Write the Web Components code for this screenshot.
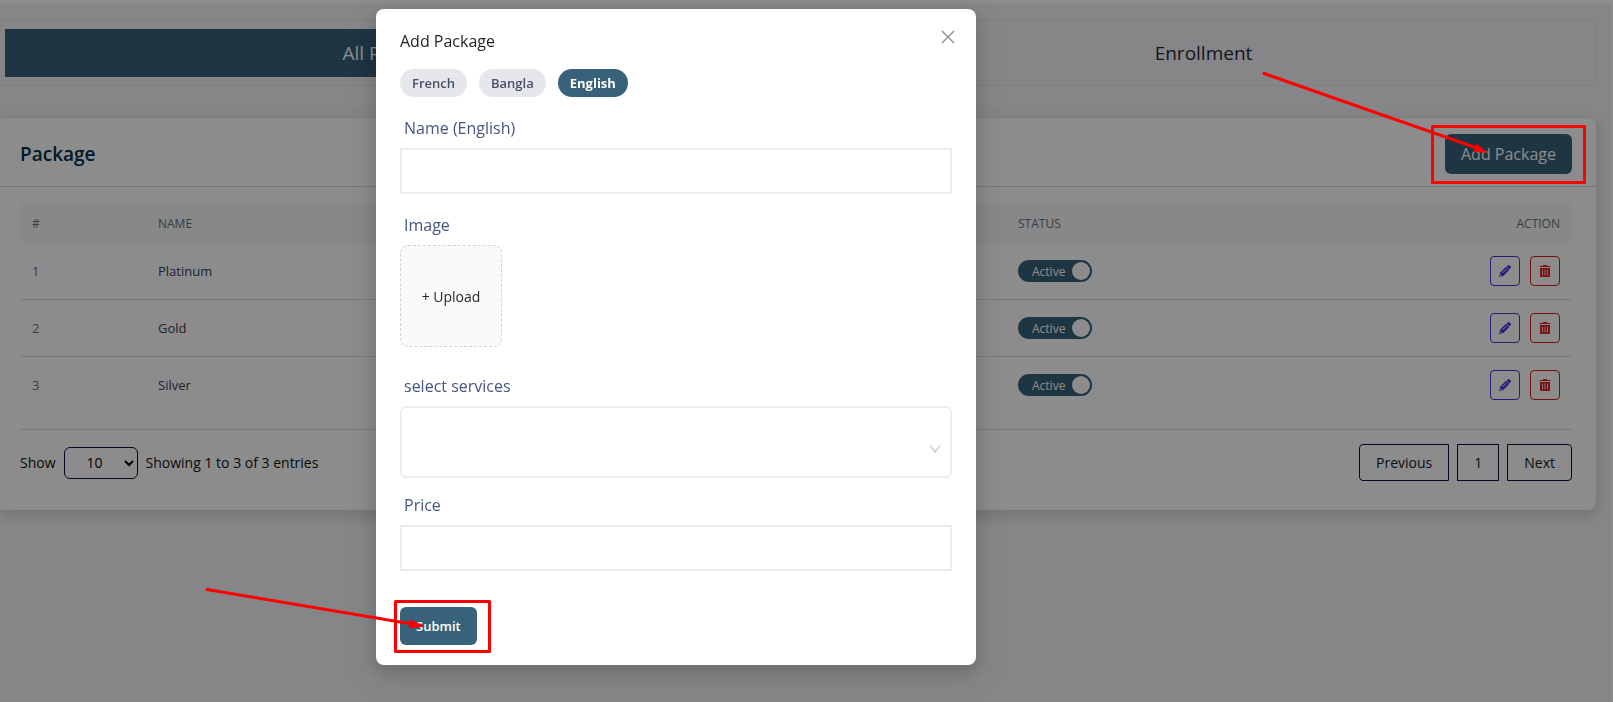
<!DOCTYPE html>
<html lang="en">
<head>
<meta charset="utf-8">
<title>Package</title>
<style>
  body {
    margin: 0;
    min-height: 100vh;
    background: #fff;
    font-family: "Open Sans", "Noto Sans", sans-serif;
    font-size: 14px;
    color: #111;
    --brand: #38617a;
    --line: #dcdde0;
    --navy: #07143f;
  }
</style>
</head>
<body>

<admin-page>
  <tab-bar>
    <button type="button" class="active">All Packages</button>
    <button type="button">Enrollment</button>
  </tab-bar>
  <package-card></package-card>
</admin-page>

<modal-dialog heading="Add Package">
  <lang-pills></lang-pills>
  <form-field label="Name (English)"></form-field>
  <form-field label="Image" type="upload"></form-field>
  <form-field label="select services" type="select"></form-field>
  <form-field label="Price"></form-field>
  <submit-button>Submit</submit-button>
</modal-dialog>

<red-marks></red-marks>

<script>
// make a template from a string
function html(markup) {
  const template = document.createElement('template');
  template.innerHTML = markup;
  return template;
}

// attach shadow dom and paste the template in it
class BaseElement extends HTMLElement {
  constructor() {
    super();
    this.attachShadow({mode: 'open'});
    this.shadowRoot.appendChild(this.constructor.template.content.cloneNode(true));
  }
}

// grey area that holds the page content
class AdminPage extends BaseElement {
  static template = html(`
    <style>
      :host {
        display: flex;
        flex-direction: column;
        gap: 32px;
        box-sizing: border-box;
        min-height: calc(100vh - 4px);
        margin: 4px 1px 0 0;
        padding: 16px 16px 32px 0;
        background: #f4f5f9;
        border-radius: 0 6px 0 0;
      }
    </style>
    <slot></slot>
  `)
}

class TabBar extends BaseElement {
  static template = html(`
    <style>
      :host {
        display: grid;
        grid-template-columns: 1fr 1fr;
        gap: 24px;
        padding: 8px 0 8px 5px;
        border: 1px solid #e5e7eb;
        border-left: 0;
      }

      ::slotted(button) {
        height: 48px;
        border: 0;
        background: none;
        font: 400 19px "Open Sans", sans-serif;
        color: #1f2937;
        cursor: pointer;
      }

      ::slotted(button.active) {
        background: var(--brand);
        color: #fff;
      }
    </style>
    <slot></slot>
  `)
}

// card with title, table and pagination
class PackageCard extends BaseElement {
  static template = html(`
    <style>
      :host {
        display: block;
        background: #fff;
        border-radius: 0 8px 8px 0;
        box-shadow: 0 4px 16px rgba(0, 0, 0, .18);
      }

      header {
        display: flex;
        justify-content: space-between;
        align-items: center;
        padding: 16px 24px 12px 20px;
        border-bottom: 1px solid #d4d6da;
      }

      h2 {
        margin: 0;
        font-size: 19px;
        font-weight: 600;
        line-height: 24px;
        color: #02304a;
      }

      .add {
        height: 40px;
        padding: 0 16px;
        border: 0;
        border-radius: 6px;
        background: var(--brand);
        color: #fff;
        font: 400 16px "Open Sans", sans-serif;
        cursor: pointer;
      }

      .content {
        padding: 16px 24px 29px 20px;
      }

      .table-wrap {
        padding-bottom: 16px;
        border-bottom: 1px solid var(--line);
      }

      table {
        width: 100%;
        table-layout: fixed;
        border-collapse: separate;
        border-spacing: 0;
      }

      th {
        height: 40px;
        padding: 0 12px;
        background: #f7f7f7;
        font-size: 12px;
        font-weight: 500;
        text-align: left;
        color: #6b7280;
      }

      th:nth-child(1) { width: 126px; box-sizing: border-box; }
      th:nth-child(2) { width: 860px; box-sizing: border-box; }
      th:last-child { text-align: right; }

      footer {
        display: flex;
        justify-content: space-between;
        align-items: center;
        padding-top: 14px;
      }

      .show, .pages {
        display: flex;
        align-items: center;
        gap: 8px;
      }

      .show select {
        width: 74px;
        height: 32px;
        padding: 0 0 0 18px;
        border: 1px solid var(--navy);
        border-radius: 6px;
        background: transparent;
        font: 400 14px "Open Sans", sans-serif;
        color: #000;
      }

      .pages button {
        height: 37px;
        padding: 0 16px;
        border: 1px solid var(--navy);
        border-radius: 0;
        background: none;
        font: 400 14px "Open Sans", sans-serif;
        color: #111827;
      }

      .pages button:first-child { border-radius: 4px 0 0 4px; }
      .pages button:last-child { border-radius: 0 4px 4px 0; }
    </style>

    <header>
      <h2>Package</h2>
      <button type="button" class="add">Add Package</button>
    </header>
    <div class="content">
      <div class="table-wrap">
        <table>
          <thead>
            <tr><th>#</th><th>NAME</th><th>STATUS</th><th>ACTION</th></tr>
          </thead>
          <tbody></tbody>
        </table>
      </div>
      <footer>
        <div class="show">
          <label for="size">Show</label>
          <select id="size"><option>10</option><option>20</option><option>50</option></select>
          <span>Showing 1 to 3 of 3 entries</span>
        </div>
        <div class="pages">
          <button type="button">Previous</button>
          <button type="button">1</button>
          <button type="button">Next</button>
        </div>
      </footer>
    </div>
  `)

  static row = html(`
    <style>
      td {
        height: 56px;
        padding: 0 12px;
        border-bottom: 1px solid var(--line);
        font-size: 13px;
        color: #374151;
      }

      td:first-child { color: #6b7280; }
      tr:last-child td { border-bottom: 0; }
    </style>
    <tr>
      <td class="id"></td>
      <td class="name"></td>
      <td><status-switch></status-switch></td>
      <td><row-actions></row-actions></td>
    </tr>
  `)

  connectedCallback() {
    const body = this.shadowRoot.querySelector('tbody');
    const names = ['Platinum', 'Gold', 'Silver'];

    this.shadowRoot.appendChild(PackageCard.row.content.querySelector('style').cloneNode(true));
    names.forEach((name, i) => {
      const row = PackageCard.row.content.querySelector('tr').cloneNode(true);
      row.querySelector('.id').textContent = i + 1;
      row.querySelector('.name').textContent = name;
      body.appendChild(row);
    });
  }
}

class StatusSwitch extends BaseElement {
  static template = html(`
    <style>
      :host { display: flex; }

      label {
        display: flex;
        align-items: center;
        justify-content: space-between;
        box-sizing: border-box;
        width: 74px;
        height: 22px;
        padding: 0 2px 0 14px;
        border-radius: 11px;
        background: var(--brand);
        color: #fff;
        font-size: 12px;
        cursor: pointer;
      }

      input {
        appearance: none;
        width: 18px;
        height: 18px;
        margin: 0;
        border-radius: 50%;
        background: #fff;
      }
    </style>
    <label>Active <input type="checkbox" checked></label>
  `)
}

class RowActions extends BaseElement {
  static template = html(`
    <style>
      :host {
        display: flex;
        justify-content: flex-end;
        gap: 10px;
      }

      button {
        display: grid;
        place-items: center;
        width: 30px;
        height: 30px;
        padding: 0;
        border: 1px solid;
        border-radius: 4px;
        background: none;
        cursor: pointer;
      }

      .edit { color: #4338e0; }
      .delete { color: #dc2020; }
    </style>
    <button type="button" class="edit" aria-label="Edit">
      <svg width="12" height="12" viewBox="0 0 12 12" fill="currentColor">
        <path d="M7.600 1.600 9 .3q.8-.6 1.6.1l1 1q.7.8.1 1.6l-1.300 1.400z"/>
        <path fill-rule="evenodd" d="M7 1.800 10.200 5 4.300 10.900 0 12l1.100-4.300zM7 3.900 3.400 7.500l.5.500 3.600-3.600zM1.500 9.200l-.4 1.700 1.700-.4z"/>
      </svg>
    </button>
    <button type="button" class="delete" aria-label="Delete">
      <svg width="12" height="12" viewBox="0 0 12 12" fill="currentColor">
        <path d="M4 0h4v1h3q.5 0 .5.500V2H.5v-.5Q.5 1 1 1h3z"/>
        <path fill-rule="evenodd" d="M1 3h10v8q0 1-1 1H2q-1 0-1-1zM3.200 4.500v6h.8v-6zM5.600 4.500v6h.8v-6zM8 4.500v6h.8v-6z"/>
      </svg>
    </button>
  `)
}

// mask and white box; the box is centred in the area left of the gutter
class ModalDialog extends BaseElement {
  static template = html(`
    <style>
      :host {
        position: fixed;
        inset: 0;
        display: flex;
        justify-content: center;
        align-items: flex-start;
        padding: 9px 261px 0 0;
        background: rgba(0, 0, 0, .45);
      }

      section {
        box-sizing: border-box;
        width: 600px;
        padding: 20px 24px;
        border-radius: 8px;
        background: #fff;
        box-shadow: 0 6px 16px rgba(0, 0, 0, .12), 0 9px 32px 8px rgba(0, 0, 0, .1);
      }

      header {
        display: flex;
        justify-content: space-between;
        align-items: flex-start;
        margin-bottom: 16px;
      }

      h1 {
        margin: 0;
        font-size: 16px;
        font-weight: 500;
        line-height: 24px;
        color: #1f1f1f;
      }

      button {
        display: grid;
        place-items: center;
        width: 16px;
        height: 16px;
        margin-right: -4px;
        padding: 0;
        border: 0;
        background: none;
        color: #8c8c8c;
        cursor: pointer;
      }
    </style>
    <section role="dialog" aria-labelledby="heading">
      <header>
        <h1 id="heading"></h1>
        <button type="button" aria-label="Close">
          <svg width="14" height="14" viewBox="0 0 14 14" stroke="currentColor" stroke-width="1.300">
            <path d="M1 1l12 12M13 1 1 13"/>
          </svg>
        </button>
      </header>
      <slot></slot>
    </section>
  `)

  connectedCallback() {
    this.shadowRoot.querySelector('h1').textContent = this.getAttribute('heading');
  }
}

class LangPills extends BaseElement {
  static template = html(`
    <style>
      :host {
        display: flex;
        gap: 12px;
        margin-bottom: 20px;
      }

      button {
        height: 28px;
        padding: 0 12px;
        border: 0;
        border-radius: 14px;
        background: #e5e7eb;
        color: #475069;
        font: 600 13px "Open Sans", sans-serif;
        cursor: pointer;
      }

      .active {
        background: var(--brand);
        color: #fff;
        font-weight: 700;
      }
    </style>
    <button type="button">French</button>
    <button type="button">Bangla</button>
    <button type="button" class="active">English</button>
  `)
}

class FormField extends BaseElement {
  static template = html(`
    <style>
      :host {
        display: flex;
        flex-direction: column;
        gap: 9px;
        margin-bottom: 20px;
      }

      :host([type="upload"]) { margin-bottom: 28px; }
      :host([type="select"]) { margin-bottom: 16px; }

      label {
        padding-left: 4px;
        font-size: 16px;
        line-height: 22px;
        color: #475681;
      }

      input, select {
        box-sizing: border-box;
        width: 100%;
        height: 46px;
        padding: 0 12px;
        border: 2px solid #ededed;
        border-radius: 0;
        background: #fff;
        font: inherit;
      }

      select {
        appearance: none;
        height: 72px;
        border-radius: 6px;
      }

      .select {
        display: grid;
        position: relative;
      }

      .select svg {
        position: absolute;
        right: 11px;
        bottom: 23px;
        pointer-events: none;
      }

      button {
        width: 102px;
        height: 102px;
        padding: 0;
        border: 1px dashed #d4d4d4;
        border-radius: 8px;
        background: #fafafa;
        color: #262626;
        font: 400 14px "Open Sans", sans-serif;
        cursor: pointer;
      }
    </style>
    <label for="control"></label>
  `)

  connectedCallback() {
    const controls = {
      text: '<input id="control" type="text">',
      upload: '<button id="control" type="button" aria-label="Upload image">+ Upload</button>',
      select: `<div class="select">
        <select id="control"><option></option></select>
        <svg width="12" height="12" viewBox="0 0 12 12" fill="none" stroke="#bfbfbf" stroke-width="1.200"><path d="M1 2.500l5 6.500 5-6.500"/></svg>
      </div>`
    };

    this.shadowRoot.querySelector('label').textContent = this.getAttribute('label');
    this.shadowRoot.appendChild(html(controls[this.getAttribute('type') || 'text']).content);
  }
}

class SubmitButton extends BaseElement {
  static template = html(`
    <style>
      :host {
        display: flex;
        padding-top: 16px;
      }

      button {
        height: 38px;
        padding: 0 16px;
        border: 0;
        border-radius: 6px;
        background: var(--brand);
        color: #fff;
        font: 600 13px "Open Sans", sans-serif;
        cursor: pointer;
      }
    </style>
    <button type="submit"><slot></slot></button>
  `)
}

// red boxes and arrows drawn over the page
class RedMarks extends BaseElement {
  static template = html(`
    <style>
      :host {
        position: fixed;
        inset: 0;
        pointer-events: none;
      }

      svg { display: block; }
    </style>
    <svg width="1613" height="702" viewBox="0 0 1613 702" fill="none" stroke="#f00" stroke-width="3" stroke-linejoin="round">
      <rect x="1432.500" y="126.500" width="152" height="56"/>
      <rect x="395.500" y="601.500" width="94" height="50"/>
      <path stroke-linecap="round" d="M1264 73.500 1477 148M207 589.500 412 624"/>
      <path fill="#f00" stroke="none" d="M1488 153 1473.500 151.800 1476.500 143.500zM425 626.500 409 628.500 410.500 619.500z"/>
    </svg>
  `)
}

window.customElements.define('admin-page', AdminPage)
window.customElements.define('tab-bar', TabBar)
window.customElements.define('status-switch', StatusSwitch)
window.customElements.define('row-actions', RowActions)
window.customElements.define('package-card', PackageCard)
window.customElements.define('modal-dialog', ModalDialog)
window.customElements.define('lang-pills', LangPills)
window.customElements.define('form-field', FormField)
window.customElements.define('submit-button', SubmitButton)
window.customElements.define('red-marks', RedMarks)
</script>
</body>
</html>
